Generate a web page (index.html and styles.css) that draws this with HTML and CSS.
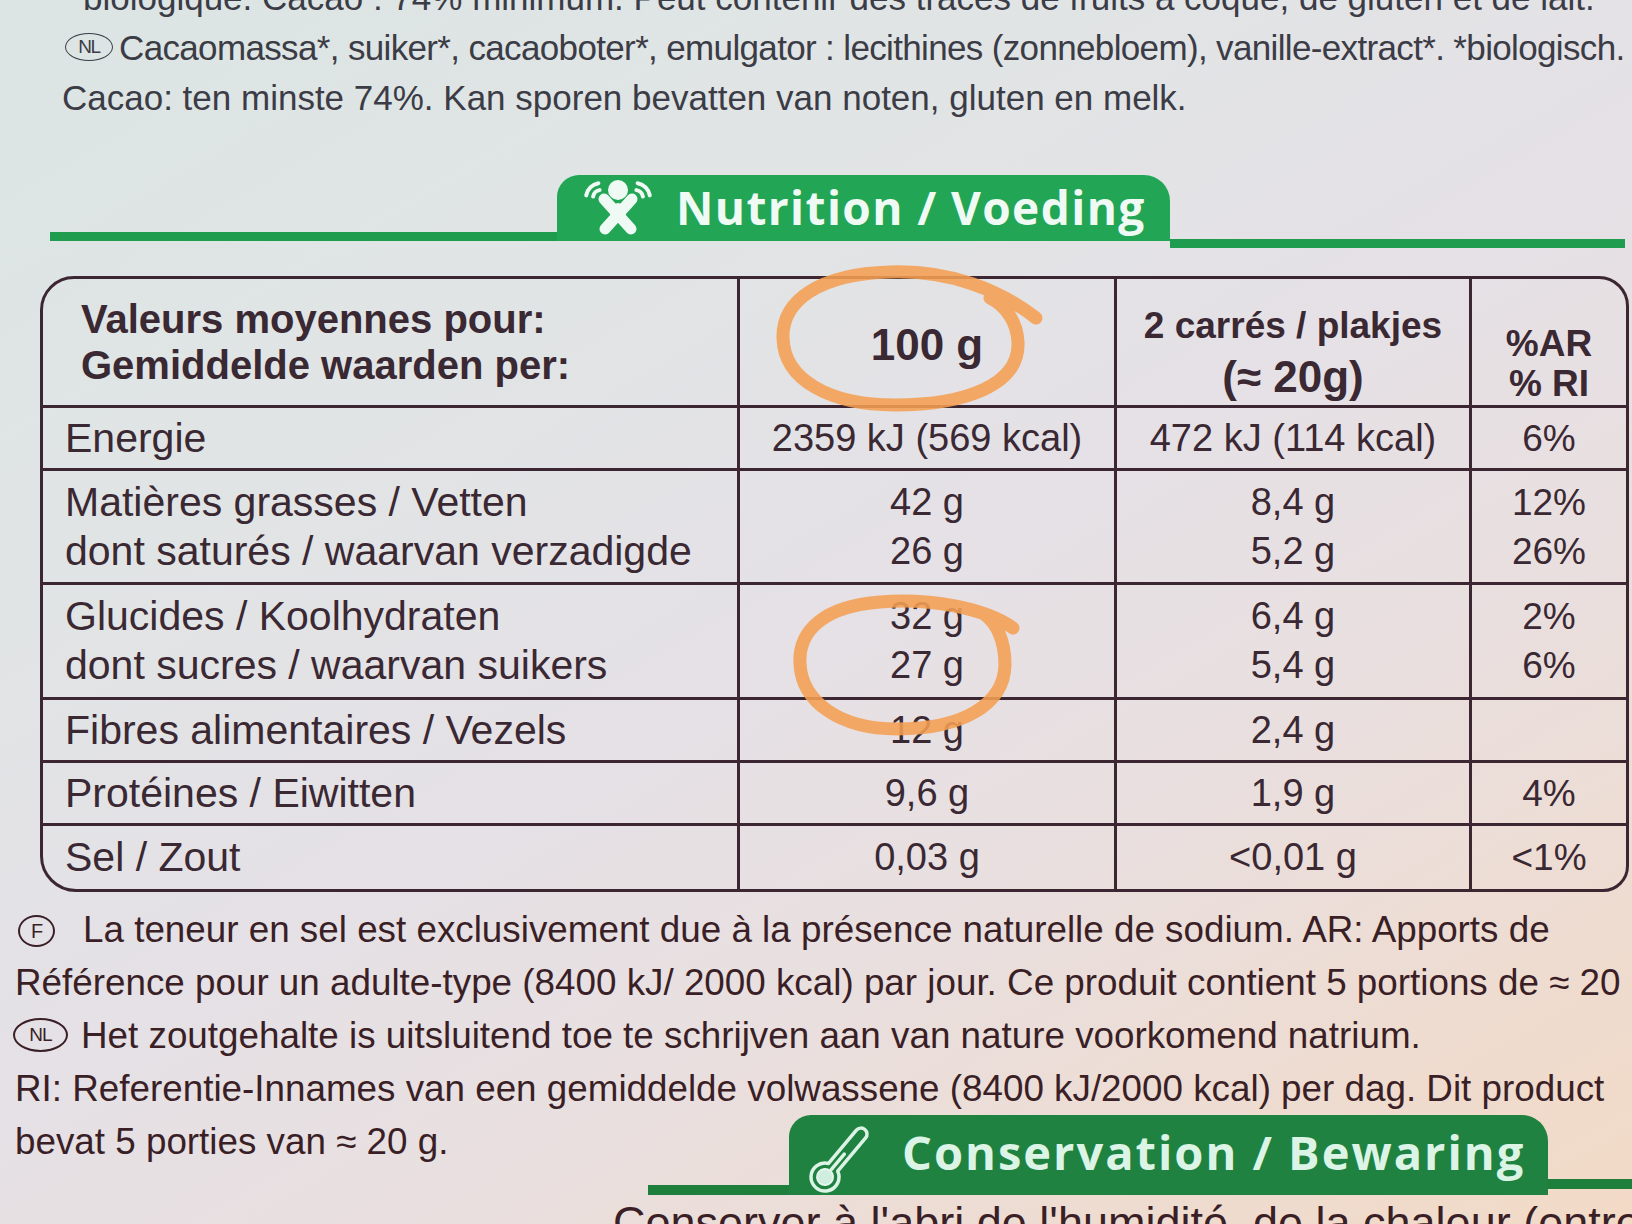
FILE: index.html
```html
<!DOCTYPE html>
<html lang="fr">
<head>
<meta charset="utf-8">
<title>Nutrition / Voeding</title>
<link rel="stylesheet" href="styles.css">
</head>
<body>
<div class="page">
  <section class="ingredients">
    <p class="l0">biologique. Cacao : 74% minimum. Peut contenir des traces de fruits à coque, de gluten et de lait.</p>
    <p class="l2"><span class="lang lang-top">NL</span>Cacaomassa*, suiker*, cacaoboter*, emulgator : lecithines (zonnebloem), vanille-extract*. *biologisch.</p>
    <p>Cacao: ten minste 74%. Kan sporen bevatten van noten, gluten en melk.</p>
  </section>

  <div class="section-head nutrition">
    <div class="rule rule-left"></div>
    <div class="tab">
      <svg class="tab-icon icon-person" viewBox="0 0 72 58" aria-hidden="true">
        <circle cx="36" cy="12" r="10" fill="#f0faf4"/>
        <path d="M22 21 L49 51 M50 21 L23 51" stroke="#f0faf4" stroke-width="11" stroke-linecap="round" fill="none"/>
        <ellipse cx="36" cy="35" rx="8" ry="10" fill="#f0faf4"/>
        <g fill="none" stroke="#f0faf4" stroke-width="4" stroke-linecap="round">
          <path d="M4.2 17.4 A15 15 0 0 1 16.4 5.2"/>
          <path d="M11.1 18.6 A8 8 0 0 1 17.6 12.1"/>
          <path d="M67.8 17.4 A15 15 0 0 0 55.6 5.2"/>
          <path d="M60.9 18.6 A8 8 0 0 0 54.4 12.1"/>
        </g>
      </svg>
      <span class="tab-title">Nutrition / Voeding</span>
    </div>
    <div class="rule rule-right"></div>
  </div>

  <div class="nutri">
    <table>
      <colgroup>
        <col class="c1"><col class="c2"><col class="c3"><col class="c4">
      </colgroup>
      <tr class="r-head">
        <th class="label head-label">Valeurs moyennes pour:<br>Gemiddelde waarden per:</th>
        <th class="head-100">100 g</th>
        <th class="head-portion"><span class="hp1">2 carrés / plakjes</span><br><span class="hp2">(≈ 20g)</span></th>
        <th class="head-ri">%AR<br>% RI</th>
      </tr>
      <tr class="r-1">
        <td class="label">Energie</td>
        <td class="val">2359 kJ (569 kcal)</td>
        <td class="val">472 kJ (114 kcal)</td>
        <td class="val pct">6%</td>
      </tr>
      <tr class="r-2">
        <td class="label">Matières grasses / Vetten<br>dont saturés / waarvan verzadigde</td>
        <td class="val">42 g<br>26 g</td>
        <td class="val">8,4 g<br>5,2 g</td>
        <td class="val pct">12%<br>26%</td>
      </tr>
      <tr class="r-2b">
        <td class="label">Glucides / Koolhydraten<br>dont sucres / waarvan suikers</td>
        <td class="val">32 g<br>27 g</td>
        <td class="val">6,4 g<br>5,4 g</td>
        <td class="val pct">2%<br>6%</td>
      </tr>
      <tr class="r-1">
        <td class="label">Fibres alimentaires / Vezels</td>
        <td class="val">12 g</td>
        <td class="val">2,4 g</td>
        <td class="val pct"></td>
      </tr>
      <tr class="r-1">
        <td class="label">Protéines / Eiwitten</td>
        <td class="val">9,6 g</td>
        <td class="val">1,9 g</td>
        <td class="val pct">4%</td>
      </tr>
      <tr class="r-1 r-last">
        <td class="label">Sel / Zout</td>
        <td class="val">0,03 g</td>
        <td class="val">&lt;0,01 g</td>
        <td class="val pct">&lt;1%</td>
      </tr>
    </table>
  </div>

  <section class="notes">
    <p class="n1"><span class="lang lang-f">F</span>La teneur en sel est exclusivement due à la présence naturelle de sodium. AR: Apports de</p>
    <p>Référence pour un adulte-type (8400 kJ/ 2000 kcal) par jour. Ce produit contient 5 portions de ≈ 20 g</p>
    <p><span class="lang lang-nl">NL</span>Het zoutgehalte is uitsluitend toe te schrijven aan van nature voorkomend natrium.</p>
    <p>RI: Referentie-Innames van een gemiddelde volwassene (8400 kJ/2000 kcal) per dag. Dit product</p>
    <p>bevat 5 porties van ≈ 20 g.</p>
  </section>

  <div class="section-head conservation">
    <div class="rule rule-left"></div>
    <div class="tab">
      <svg class="tab-icon icon-thermo" viewBox="0 0 60 74" aria-hidden="true">
        <g transform="translate(15 62) rotate(40)" stroke="#dcf4e6" fill="none" stroke-width="3.5" stroke-linejoin="round">
          <path d="M-6 -12.65 L-6 -56 A6 6 0 0 1 6 -56 L6 -12.65 A14 14 0 1 1 -6 -12.65 Z"/>
          <circle cx="0" cy="0" r="8" fill="#cfeee0" stroke="#e6f8ee" stroke-width="2"/>
          <path d="M0 -9 L0 -30" stroke-width="3.5" stroke-linecap="round"/>
        </g>
      </svg>
      <span class="tab-title">Conservation / Bewaring</span>
    </div>
    <div class="rule rule-right"></div>
  </div>
  <p class="storage">Conserver à l'abri de l'humidité, de la chaleur (entre 15 et 18 °C).</p>

  <svg class="marks" viewBox="0 0 1632 1224" aria-hidden="true">
    <path d="M1036 318 C1000 290 950 270 890 272 C820 274 782 300 783 338 C784 380 830 405 895 405 C965 405 1020 385 1018 342 C1017 322 1006 306 990 298" />
    <path d="M1013 628 C985 608 930 598 880 602 C825 606 798 630 800 664 C802 702 840 729 897 729 C962 729 1004 705 1005 665 C1005 640 996 622 984 614" />
  </svg>
</div>
</body>
</html>
```

FILE: styles.css
```css
html, body {
  margin: 0;
  padding: 0;
}

body {
  width: 1632px;
  height: 1224px;
  overflow: hidden;
  font-family: "Liberation Sans", Arial, sans-serif;
  color: #3a2833;
  background: linear-gradient(150deg, #dce5e4 0%, #e1e4e5 30%, #e5e1e6 50%, #e9dfdf 68%, #eedcd1 85%, #f2dac6 100%);
}

.page {
  display: flow-root;
  position: relative;
  width: 1632px;
  height: 1224px;
}

p {
  margin: 0;
}

/* ---------- ingredients ---------- */
.ingredients {
  margin-top: -27px;
  font-size: 35px;
  line-height: 50px;
  color: #3b3c46;
  white-space: nowrap;
}

.ingredients p {
  padding-left: 62px;
}

.ingredients .l0 {
  padding-left: 83px;
}

.ingredients .l2 {
  letter-spacing: -0.65px;
}

.lang {
  display: inline-block;
  box-sizing: border-box;
  border: 2px solid currentColor;
  border-radius: 50%;
  text-align: center;
  letter-spacing: -1px;
}

.lang-top {
  width: 48px;
  height: 28px;
  border-width: 1.5px;
  font-size: 19px;
  line-height: 25px;
  letter-spacing: -1.5px;
  margin: 0 6px 0 3px;
  vertical-align: 7px;
}

/* ---------- section heads ---------- */
.section-head {
  display: flex;
  align-items: flex-end;
}

.rule {
  height: 9px;
}

.tab {
  display: flex;
  align-items: center;
  box-sizing: border-box;
  border-radius: 22px 26px 0 0;
  font-family: "Open Sans", "Noto Sans", sans-serif;
  font-weight: 700;
}

.tab-title {
  font-size: 46px;
  line-height: 1;
  letter-spacing: 1.4px;
}

.nutrition {
  margin-top: 52px;
}

.nutrition .rule {
  background: #1f9c4d;
}

.nutrition .rule-left {
  margin-left: 50px;
  width: 507px;
}

.nutrition .tab {
  width: 613px;
  height: 66px;
  padding: 0 0 2px 25px;
  gap: 22px;
  background: #22a656;
  color: #f0faf4;
}

.icon-person {
  width: 72px;
  height: 58px;
  flex: none;
}

.nutrition .rule-right {
  flex: 1;
  margin-right: 7px;
  margin-bottom: -7px;
}

/* ---------- table ---------- */
.nutri {
  margin: 35px 3px 0 40px;
  border: 3px solid #3b2631;
  border-radius: 34px 30px 26px 36px;
  overflow: hidden;
}

.nutri table {
  width: 1583px;
  table-layout: fixed;
  border-collapse: separate;
  border-spacing: 0;
}

col.c1 { width: 697px; }
col.c2 { width: 377px; }
col.c3 { width: 355px; }
col.c4 { width: 154px; }

.nutri th,
.nutri td {
  box-sizing: border-box;
  padding: 0;
  border-right: 3px solid #3b2631;
  border-bottom: 3px solid #3b2631;
  vertical-align: middle;
  white-space: nowrap;
  color: #3a2833;
}

.nutri th:last-child,
.nutri td:last-child {
  border-right: none;
}

.nutri tr.r-last td {
  border-bottom: none;
}

tr.r-head { height: 129px; }
tr.r-1 { height: 63px; }
tr.r-2 { height: 114px; }
tr.r-2b { height: 115px; }
tr.r-last { height: 63px; }

.nutri th {
  font-weight: 700;
  text-align: center;
  font-size: 16px;
  line-height: 1;
}

.nutri th.head-label {
  text-align: left;
  padding-left: 38px;
  font-size: 40px;
  line-height: 46px;
}

.nutri th.head-100 {
  font-size: 44px;
  line-height: 50px;
  padding-top: 6px;
}

.nutri th.head-portion {
  vertical-align: top;
  padding-top: 24px;
}

.hp1 {
  font-size: 37px;
  line-height: 46px;
}

.hp2 {
  font-size: 44px;
  line-height: 56px;
}

.nutri th.head-ri {
  vertical-align: top;
  font-size: 37px;
  line-height: 40px;
  padding-top: 45px;
}

.nutri td.label {
  padding-left: 22px;
  font-size: 41px;
  line-height: 49px;
}

.nutri td.val {
  text-align: center;
  font-size: 38px;
  line-height: 49px;
}

.nutri td.pct {
  font-size: 37px;
}

/* ---------- notes ---------- */
.notes {
  margin-top: 11px;
  padding-left: 15px;
  font-size: 36.8px;
  line-height: 53px;
  color: #3a1f26;
  white-space: nowrap;
}

.lang-f {
  width: 37px;
  height: 32px;
  font-size: 20px;
  line-height: 28px;
  margin: 0 28px 0 3px;
  vertical-align: 4px;
}

.lang-nl {
  width: 55px;
  height: 34px;
  font-size: 19px;
  line-height: 30px;
  margin: 0 13px 0 -2px;
  vertical-align: 7px;
}

/* ---------- conservation ---------- */
.conservation {
  margin-top: -53px;
}

.conservation .rule {
  height: 10px;
  background: #1e7f3d;
}

.conservation .rule-left {
  margin-left: 648px;
  width: 141px;
}

.conservation .tab {
  width: 759px;
  height: 80px;
  padding: 0 0 6px 21px;
  gap: 32px;
  background: #1f8240;
  color: #dcf4e6;
}

.conservation .tab-title {
  font-size: 47px;
  letter-spacing: 2px;
}

.icon-thermo {
  width: 60px;
  height: 74px;
  flex: none;
  align-self: flex-start;
  overflow: visible;
}

.conservation .rule-right {
  flex: 1;
  margin-bottom: 6px;
}

.storage {
  margin-top: 4px;
  padding-left: 613px;
  font-size: 45px;
  line-height: 48px;
  color: #3a1f26;
  white-space: nowrap;
}

/* ---------- orange hand-drawn marks ---------- */
.marks {
  position: absolute;
  left: 0;
  top: 0;
  width: 1632px;
  height: 1224px;
  pointer-events: none;
  fill: none;
  stroke: #f5a053;
  stroke-width: 13;
  stroke-linecap: round;
  stroke-linejoin: round;
  opacity: 0.88;
}
```
